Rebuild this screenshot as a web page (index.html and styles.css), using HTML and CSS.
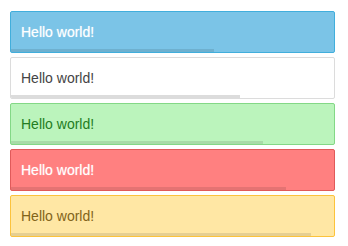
FILE: index.html
```html
<!DOCTYPE html>
<html lang="en">
<head>
    <meta charset="UTF-8">
    <title>Notices</title>
    <link rel="stylesheet" href="styles.css">
</head>
<body>
    <div class="notice-list">
        <div class="notice info">
            Hello world!
            <div class="progress" style="width: 63%"></div>
        </div>
        <div class="notice plain">
            Hello world!
            <div class="progress" style="width: 71%"></div>
        </div>
        <div class="notice success">
            Hello world!
            <div class="progress" style="width: 78%"></div>
        </div>
        <div class="notice error">
            Hello world!
            <div class="progress" style="width: 85%"></div>
        </div>
        <div class="notice warning">
            Hello world!
            <div class="progress" style="width: 93%"></div>
        </div>
    </div>
</body>
</html>
```

FILE: styles.css
```css
body {
    margin: 0;
    padding: 11px 13px 0 10px;
    font-family: "Liberation Sans", Arial, sans-serif;
    background: #fff;
}

.notice-list {
    display: flex;
    flex-direction: column;
    gap: 4px;
}

/* one notice */
.notice {
    position: relative;
    height: 40px;
    box-sizing: content-box;
    display: flex;
    align-items: center;
    padding: 0 10px;
    border: 1px solid;
    border-radius: 2px;
    font-size: 14px;
    overflow: hidden;
}

.progress {
    position: absolute;
    left: 0;
    bottom: 0;
    height: 3px;
    background: rgba(0, 0, 0, 0.1);
}

.info {
    background: #7bc4e7;
    border-color: #41aedc;
    color: #fff;
    text-shadow: 0 0 1px rgba(255, 255, 255, 0.6);
}

.plain {
    background: #fff;
    border-color: #dcdcdc;
    color: #444;
}

.plain .progress {
    background: #dcdcdc;
}

.success {
    background: #bbf4bc;
    border-color: #83d886;
    color: #237d23;
}

.error {
    background: #ff8080;
    border-color: #e05a5a;
    color: #fff;
    text-shadow: 0 0 1px rgba(255, 255, 255, 0.6);
}

.warning {
    background: #ffe7a4;
    border-color: #fcc33c;
    color: #826419;
}
```
